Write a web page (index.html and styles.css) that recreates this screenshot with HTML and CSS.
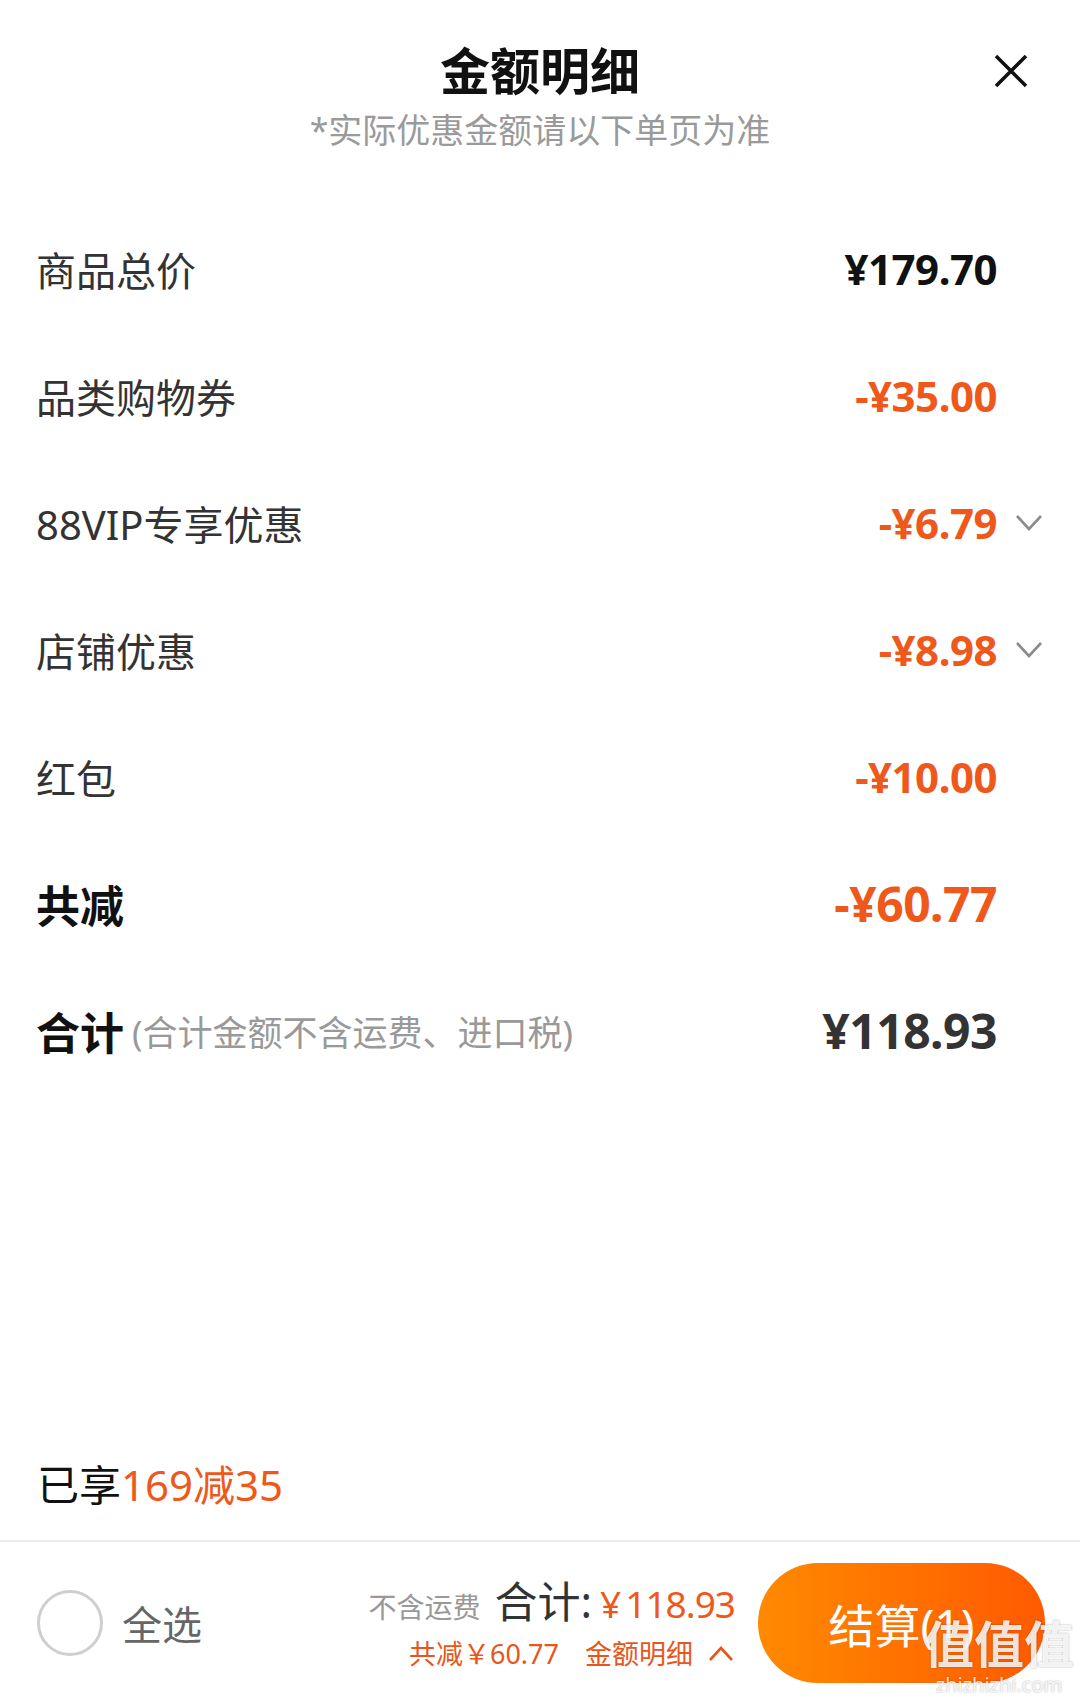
FILE: index.html
```html
<!doctype html>
<html>
<head>
    <meta charset="utf-8">
    <title>金额明细</title>
    <link rel="stylesheet" href="styles.css">
</head>
<body>
    <div class="sheet">
        <header class="sheet-head">
            <div class="head-row">
                <span></span>
                <h1 class="title">金额明细</h1>
                <button class="close" aria-label="关闭">
                    <svg width="36" height="36" viewBox="0 0 36 36"><path d="M3 3 L33 33 M33 3 L3 33" stroke="#111" stroke-width="3.6" fill="none"/></svg>
                </button>
            </div>
            <p class="note">*实际优惠金额请以下单页为准</p>
        </header>

        <div class="detail-list">
            <div class="row">
                <span class="label">商品总价</span>
                <span class="amount">¥179.70</span>
                <span class="more"></span>
            </div>
            <div class="row">
                <span class="label">品类购物券</span>
                <span class="amount minus">-¥35.00</span>
                <span class="more"></span>
            </div>
            <div class="row">
                <span class="label">88VIP专享优惠</span>
                <span class="amount minus">-¥6.79</span>
                <span class="more"><svg width="28" height="19" viewBox="0 0 28 19"><polyline points="2,3 14,16 26,3" stroke="#8c8c8c" stroke-width="2.6" fill="none"/></svg></span>
            </div>
            <div class="row">
                <span class="label">店铺优惠</span>
                <span class="amount minus">-¥8.98</span>
                <span class="more"><svg width="28" height="19" viewBox="0 0 28 19"><polyline points="2,3 14,16 26,3" stroke="#8c8c8c" stroke-width="2.6" fill="none"/></svg></span>
            </div>
            <div class="row">
                <span class="label">红包</span>
                <span class="amount minus">-¥10.00</span>
                <span class="more"></span>
            </div>
            <div class="row">
                <span class="label strong">共减</span>
                <span class="amount minus big">-¥60.77</span>
                <span class="more"></span>
            </div>
            <div class="row">
                <span class="label strong">合计<small class="hint">(合计金额不含运费、进口税)</small></span>
                <span class="amount big total">¥118.93</span>
                <span class="more"></span>
            </div>
        </div>

        <div class="spacer"></div>

        <p class="promo">已享<span class="hl">169减35</span></p>

        <footer class="bar">
            <label class="select-all"><span class="radio"></span>全选</label>
            <div class="totals">
                <div class="totals-main">
                    <span class="ship">不含运费</span>
                    <span class="sum-label">合计:</span>
                    <span class="sum">¥&#8201;118.93</span>
                </div>
                <div class="totals-sub">
                    <span>共减￥60.77</span>
                    <span class="detail-link">金额明细
                        <svg width="28" height="18" viewBox="0 0 28 18"><polyline points="3,16 14,4 25,16" stroke="#e8561c" stroke-width="2.6" fill="none"/></svg>
                    </span>
                </div>
            </div>
            <button class="checkout">结算(1)</button>
            <div class="watermark">
                <span class="wm-big">值值值</span>
                <span class="wm-small">zhizhizhi.com</span>
            </div>
        </footer>
    </div>
</body>
</html>
```

FILE: styles.css
```css
body {
    margin: 0;
    background-color: #fff;
    font-family: "Noto Sans", "Noto Sans CJK SC", sans-serif;
    color: #333;
}
.sheet {
    display: flex;
    flex-direction: column;
    height: 100vh;
}

/* header */
.sheet-head {
    padding-top: 41px;
}
.head-row {
    display: grid;
    grid-template-columns: 1fr auto 1fr;
    align-items: center;
    padding: 0 51px 0 51px;
}
.title {
    margin: 0;
    font-size: 50px;
    line-height: 60px;
    font-weight: bold;
    color: #111;
}
.close {
    justify-self: end;
    width: 36px;
    height: 36px;
    padding: 0;
    border: none;
    background: none;
    display: flex;
}
.note {
    margin: 6px 0 0;
    text-align: center;
    font-size: 34px;
    line-height: 46px;
    color: #9a9a9a;
}

/* rows */
.detail-list {
    margin-top: 52px;
}
.row {
    display: flex;
    align-items: center;
    height: 127px;
    padding: 0 37px 0 36px;
}
.label {
    flex: 1;
    font-size: 40px;
    color: #333;
    display: flex;
    align-items: center;
}
.label.strong {
    font-size: 44px;
    font-weight: bold;
    color: #111;
}
.hint {
    font-size: 35px;
    font-weight: normal;
    color: #999;
    margin-left: 8px;
}
.amount {
    font-size: 42px;
    font-weight: bold;
    color: #111;
    letter-spacing: -0.5px;
}
.amount.minus {
    color: #ef581b;
}
.amount.big {
    font-size: 48px;
}
.amount.total {
    color: #333;
}
.more {
    width: 28px;
    margin-left: 18px;
    display: flex;
    align-items: center;
}

.spacer {
    flex: 1;
}

/* promo */
.promo {
    margin: 0 0 27px;
    padding-left: 37px;
    font-size: 42px;
    line-height: 56px;
    color: #111;
}
.hl {
    color: #ef581b;
}

/* bottom bar */
.bar {
    position: relative;
    display: flex;
    align-items: center;
    height: 162px;
    border-top: 2px solid #ececec;
    padding: 0 35px 0 37px;
}
.select-all {
    flex: 1;
    display: flex;
    align-items: center;
    gap: 19px;
    font-size: 40px;
    color: #666;
}
.radio {
    width: 60px;
    height: 60px;
    border: 3px solid #cfcfcf;
    border-radius: 50%;
}
.totals {
    display: flex;
    flex-direction: column;
    align-items: flex-end;
    margin-right: 23px;
    margin-top: -6px;
}
.totals-main {
    display: flex;
    align-items: baseline;
}
.ship {
    font-size: 28px;
    color: #999;
    margin-right: 14px;
}
.sum-label {
    font-size: 43px;
    color: #333;
    margin-right: 8px;
}
.sum {
    font-size: 37px;
    color: #ef581b;
    letter-spacing: -1px;
}
.totals-sub {
    display: flex;
    align-items: center;
    gap: 26px;
    font-size: 27px;
    color: #e8561c;
    margin-top: 2px;
}
.detail-link {
    display: flex;
    align-items: center;
    gap: 14px;
}
.checkout {
    width: 287px;
    height: 120px;
    border: none;
    border-radius: 60px;
    background: linear-gradient(90deg, #ff8a00, #ff5a00);
    color: #fff;
    font-family: inherit;
    font-size: 46px;
    padding: 0;
}

/* site watermark over the corner */
.watermark {
    position: absolute;
    right: 6px;
    bottom: 8px;
    display: flex;
    flex-direction: column;
    align-items: center;
    color: rgba(255, 255, 255, 0.85);
    text-shadow: 0 0 2px rgba(0, 0, 0, 0.35);
    pointer-events: none;
}
.wm-big {
    font-size: 50px;
    line-height: 60px;
    font-weight: bold;
}
.wm-small {
    font-size: 20px;
    line-height: 22px;
}
```
